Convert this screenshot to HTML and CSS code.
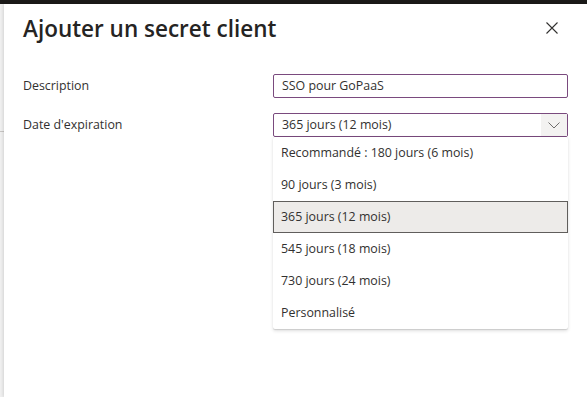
FILE: index.html
```html
<!DOCTYPE html>
<html lang="fr">
<head>
<meta charset="utf-8">
<link rel="stylesheet" href="styles.css">
</head>
<body>
<div class="topbar"></div>
<div class="page">
  <div class="backdrop"><div class="divider"></div></div>
  <div class="panel">
    <div class="header">
      <h1 class="title">Ajouter un secret client</h1>
      <button class="close" aria-label="Fermer">
        <svg width="12" height="12" viewBox="0 0 12 12"><path d="M0.5 0.5 L11.5 11.5 M11.5 0.5 L0.5 11.5" stroke="#323130" stroke-width="1.1" fill="none"/></svg>
      </button>
    </div>
    <div class="form">
      <div class="row">
        <label class="label">Description</label>
        <div class="input">SSO pour GoPaaS</div>
      </div>
      <div class="row">
        <label class="label">Date d'expiration</label>
        <div class="field">
          <div class="select">
            <span class="value">365 jours (12 mois)</span>
            <span class="caret">
              <svg width="12" height="7" viewBox="0 0 12 7"><path d="M0.5 0.5 L6 6 L11.5 0.5" stroke="#605e5c" stroke-width="0.9" fill="none"/></svg>
            </span>
          </div>
          <ul class="menu">
            <li class="item">Recommandé : 180 jours (6 mois)</li>
            <li class="item">90 jours (3 mois)</li>
            <li class="item selected">365 jours (12 mois)</li>
            <li class="item">545 jours (18 mois)</li>
            <li class="item">730 jours (24 mois)</li>
            <li class="item">Personnalisé</li>
          </ul>
        </div>
      </div>
    </div>
  </div>
</div>
</body>
</html>
```

FILE: styles.css
```css
* { box-sizing: border-box; }
html, body { margin: 0; padding: 0; }
body {
  width: 587px;
  height: 397px;
  overflow: hidden;
  background: #ffffff;
  font-family: "Open Sans", "Noto Sans", sans-serif;
  color: #323130;
}
.topbar {
  height: 4px;
  background: #1b1a19;
}
.page {
  display: flex;
  height: 393px;
}
.backdrop {
  width: 4px;
  background: #f0f0f0;
}
.divider {
  margin-top: 127px;
  height: 1px;
  background: #c8c6c4;
}
.panel {
  flex: 1;
  background: #fff;
  box-shadow: -1px 0 3px rgba(0,0,0,0.12);
  padding: 0 0 0 19px;
}
.header {
  display: flex;
  align-items: center;
  justify-content: space-between;
  height: 49px;
  padding-right: 29px;
}
.title {
  margin: 0;
  font-size: 22.5px;
  font-weight: 600;
  color: #252423;
  letter-spacing: 0;
}
.close {
  border: 0;
  background: none;
  padding: 0;
  width: 12px;
  height: 12px;
  display: flex;
  margin-top: -2px;
}
.form {
  padding-top: 21px;
  padding-right: 19px;
}
.row {
  display: flex;
  align-items: flex-start;
  margin-bottom: 15px;
}
.label {
  width: 250px;
  font-size: 12.4px;
  line-height: 24px;
  color: #323130;
}
.input, .select {
  width: 295px;
  height: 24px;
  border: 1px solid #7a4a7e;
  border-radius: 2px;
  font-size: 12.4px;
  line-height: 22px;
  padding-left: 8px;
  color: #323130;
}
.field { position: relative; width: 295px; }
.select {
  display: flex;
  justify-content: space-between;
  padding-right: 0;
}
.caret {
  width: 26px;
  height: 22px;
  background: #f3f2f1;
  display: flex;
  align-items: center;
  justify-content: center;
}
.menu {
  position: absolute;
  top: 24px;
  left: 0;
  width: 295px;
  margin: 0;
  padding: 0;
  list-style: none;
  background: #fff;
  box-shadow: 0 1.6px 3.6px rgba(0,0,0,0.13), 0 0.3px 0.9px rgba(0,0,0,0.11);
  border-radius: 2px;
}
.item {
  height: 32px;
  line-height: 32px;
  padding-left: 8px;
  font-size: 12.4px;
  color: #323130;
}
.item.selected {
  background: #edebe9;
  border: 1px solid #605e5c;
  line-height: 30px;
  padding-left: 7px;
}
```
